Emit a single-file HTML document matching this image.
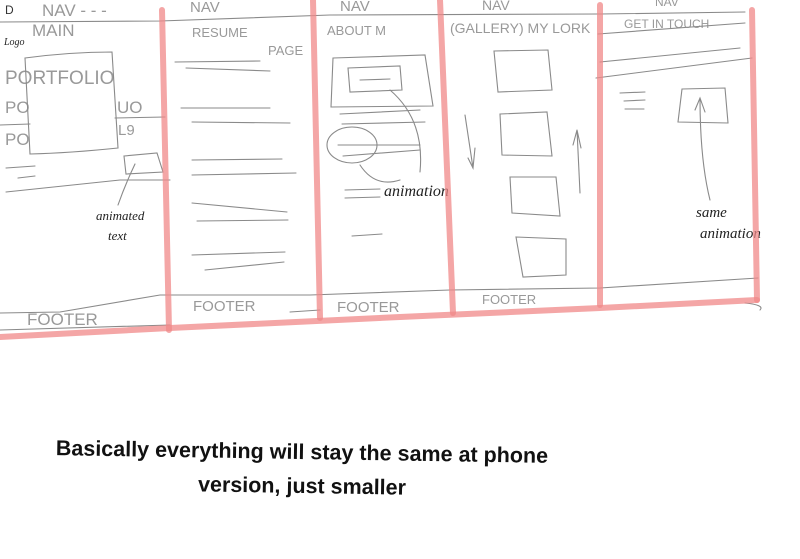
<!DOCTYPE html>
<html><head><meta charset="utf-8"><style>
body{margin:0;width:800px;height:559px;background:#fff;overflow:hidden;position:relative;font-family:"Liberation Sans",sans-serif}
svg{position:absolute;left:0;top:0}
.t{position:absolute;left:0;width:604px;text-align:center;font-size:21.5px;font-weight:bold;color:#111;letter-spacing:0;transform:rotate(0.9deg)}
</style></head><body>
<svg width="800" height="559" viewBox="0 0 800 559" fill="none" stroke="#8a8a8a" stroke-width="1.1" stroke-linecap="round">
<g font-family="Liberation Sans, sans-serif" fill="#999" stroke="none" font-size="15">
<text x="42" y="16" font-size="17">NAV  - - -</text>
<text x="190" y="12" font-size="15">NAV</text>
<text x="340" y="11" font-size="15">NAV</text>
<text x="482" y="10" font-size="14">NAV</text>
<text x="655" y="6" font-size="12">NAV</text>
<text x="32" y="36" font-size="17">MAIN</text>
<text x="192" y="37" font-size="13">RESUME</text>
<text x="268" y="55" font-size="13">PAGE</text>
<text x="327" y="35" font-size="13">ABOUT M</text>
<text x="450" y="33" font-size="14">(GALLERY) MY LORK</text>
<text x="624" y="28" font-size="12">GET IN TOUCH</text>
<text x="5" y="84" font-size="19">PORTFOLIO</text>
<text x="5" y="113" font-size="17">PO</text>
<text x="5" y="145" font-size="17">PO</text>
<text x="117" y="113" font-size="17">UO</text>
<text x="118" y="135" font-size="15">L9</text>
<text x="27" y="325" font-size="17">FOOTER</text>
<text x="193" y="311" font-size="15">FOOTER</text>
<text x="337" y="312" font-size="15">FOOTER</text>
<text x="482" y="304" font-size="13">FOOTER</text>
<text x="5" y="14" font-size="12" fill="#333">D</text>
</g>
<g font-family="Liberation Serif, serif" fill="#222" stroke="none" font-style="italic">
<text x="4" y="45" font-size="10">Logo</text>
<text x="96" y="220" font-size="13">animated</text>
<text x="108" y="240" font-size="13">text</text>
<text x="384" y="196" font-size="16">animation</text>
<text x="696" y="217" font-size="15">same</text>
<text x="700" y="238" font-size="15">animation</text>
</g>
<path d="M0 22 L160 21 L330 15 L600 14 L745 12"/>
<path d="M0 125 L30 124 M115 118 L165 117"/>
<path d="M25 58 Q70 52 112 52 L118 148 Q70 153 30 154 Z"/>
<path d="M124 156 L157 153 L163 172 L126 174 Z"/>
<path d="M6 168 L35 166 M18 178 L35 176 M6 192 L120 180 L170 180"/>
<path d="M135 164 Q125 185 118 205"/>
<path d="M175 62 L260 61 M186 68 L270 71 M181 108 L270 108 M192 122 L290 123 M192 160 L282 159 M192 175 L296 173 M192 203 L287 212 M197 221 L288 220 M192 255 L285 252 M205 270 L284 262"/>
<path d="M333 58 L425 55 L433 106 L331 107 Z M348 68 L400 66 L402 90 L350 92 Z M360 80 L390 79"/>
<path d="M340 114 L420 110 M342 124 L425 122 M338 145 L420 145 M343 156 L420 150 M345 190 L380 189 M345 198 L380 197 M352 236 L382 234"/>
<ellipse cx="352" cy="145" rx="25" ry="18"/>
<path d="M390 90 Q425 120 420 172 M360 165 Q375 188 400 180"/>
<path d="M494 51 L548 50 L552 90 L498 92 Z M500 114 L547 112 L552 156 L502 155 Z M510 177 L556 177 L560 216 L512 213 Z M516 237 L566 239 L566 275 L523 277 Z"/>
<path d="M465 115 L473 168 M468 158 L473 168 L475 148 M580 193 L577 130 M573 145 L577 130 L581 148"/>
<path d="M598 34 L745 23 M600 62 L740 48 M596 78 L752 58 M620 93 L645 92 M624 101 L645 100 M625 109 L644 109"/>
<path d="M682 89 L725 88 L728 123 L678 122 Z M710 200 Q700 160 700 98 M695 110 L700 98 L705 112"/>
<path d="M0 313 L60 312 L160 295 L310 295 L450 290 L600 288 L758 278"/>
<path d="M0 330 L170 325 M290 312 L320 310 M745 303 Q765 305 760 310"/>
<g stroke="#f08888" stroke-opacity="0.75" stroke-width="6">
<path d="M162 10 L169 330"/>
<path d="M313 0 L320 318"/>
<path d="M440 0 L453 313"/>
<path d="M600 5 L600 305"/>
<path d="M752 10 L757 300"/>
<path d="M0 337 L170 328 L400 317 L600 308 L757 300"/>
</g>
</svg>
<div class="t" style="top:440px">Basically everything will stay the same at phone</div>
<div class="t" style="top:474px">version, just smaller</div>
</body></html>
